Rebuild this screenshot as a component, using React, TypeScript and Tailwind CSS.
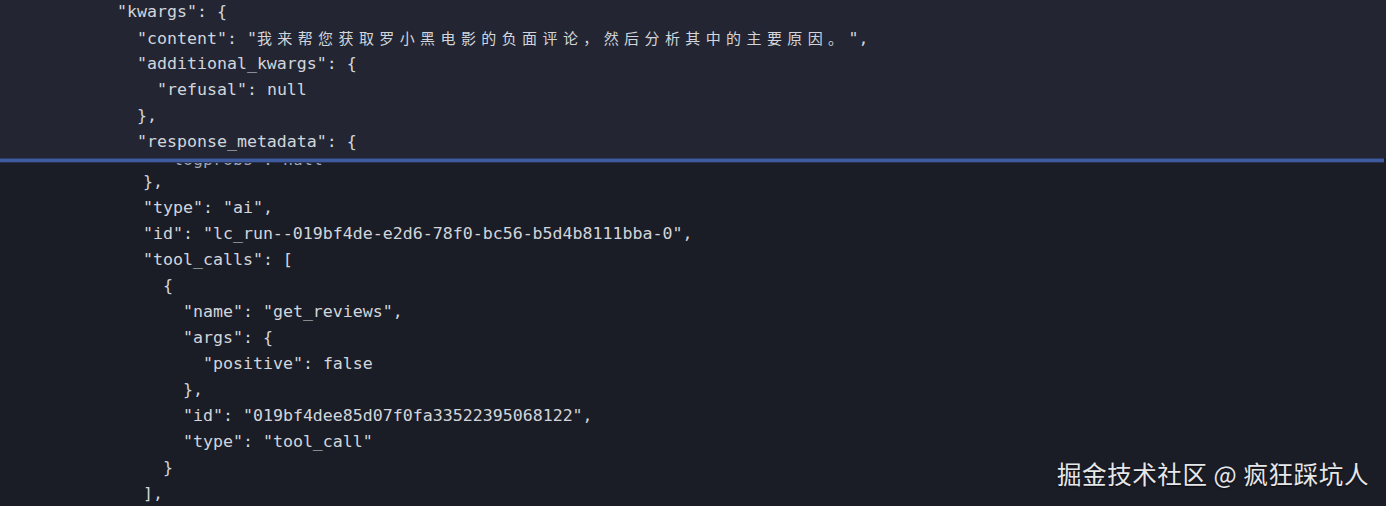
const indents = ['pl-0', 'pl-[20px]', 'pl-[40px]', 'pl-[60px]'];

type Line = { level: number; text: string; cjk?: { before: string; zh: string; after: string } };

const topLines: Line[] = [
  { level: 0, text: '"kwargs": {' },
  {
    level: 1,
    text: '',
    cjk: { before: '"content": "', zh: '我来帮您获取罗小黑电影的负面评论，然后分析其中的主要原因。', after: '",' },
  },
  { level: 1, text: '"additional_kwargs": {' },
  { level: 2, text: '"refusal": null' },
  { level: 1, text: '},' },
  { level: 1, text: '"response_metadata": {' },
];

const bottomLines: Line[] = [
  { level: 0, text: '},' },
  { level: 0, text: '"type": "ai",' },
  { level: 0, text: '"id": "lc_run--019bf4de-e2d6-78f0-bc56-b5d4b8111bba-0",' },
  { level: 0, text: '"tool_calls": [' },
  { level: 1, text: '{' },
  { level: 2, text: '"name": "get_reviews",' },
  { level: 2, text: '"args": {' },
  { level: 3, text: '"positive": false' },
  { level: 2, text: '},' },
  { level: 2, text: '"id": "019bf4dee85d07f0fa33522395068122",' },
  { level: 2, text: '"type": "tool_call"' },
  { level: 1, text: '}' },
  { level: 0, text: '],' },
];

function CodeLine({ line }: { line: Line }) {
  return (
    <div className={`h-[26px] leading-[26px] whitespace-pre ${indents[line.level]}`}>
      {line.cjk ? (
        <>
          {line.cjk.before}
          <span className="font-['Noto_Sans_CJK_SC',sans-serif] text-[15px] tracking-[5.4px]">{line.cjk.zh}</span>
          {line.cjk.after}
        </>
      ) : (
        line.text
      )}
    </div>
  );
}

export default function App() {
  return (
    <div className="relative w-[1386px] h-[506px] overflow-hidden flex flex-col bg-[#1b1d26] text-[#d2d5db] font-['DejaVu_Sans_Mono','Noto_Sans_CJK_SC',monospace] text-[16.6px]">
      <div className="h-[158px] shrink-0 overflow-hidden bg-[#232632] pl-[117px]">
        <div className="-mt-px">
          {topLines.map((l, i) => (
            <CodeLine key={i} line={l} />
          ))}
        </div>
      </div>

      <div className="h-[5px] shrink-0 flex flex-col pr-[2px]">
        <div className="h-px bg-[#2c3c66]" />
        <div className="h-[3px] bg-[#3f5ba0]" />
        <div className="h-px bg-[#27314f]" />
      </div>

      <div className="flex-1 overflow-hidden pl-[143px]">
        {/* row scrolled mostly out of view under the divider */}
        <div className="h-[6px] overflow-hidden text-[#a0a6b3]">
          <div className="-mt-[16px]">
            <CodeLine line={{ level: 1, text: '"logprobs": null' }} />
          </div>
        </div>
        {bottomLines.map((l, i) => (
          <CodeLine key={i} line={l} />
        ))}
      </div>

      <div className="absolute right-[17px] bottom-[17px] text-[24.5px] leading-[30px] tracking-[0.6px] text-[#e6e7ea] font-['Noto_Sans_CJK_SC',sans-serif] [text-shadow:0_1px_2px_rgba(0,0,0,0.6)]">
        掘金技术社区 @ 疯狂踩坑人
      </div>
    </div>
  );
}
